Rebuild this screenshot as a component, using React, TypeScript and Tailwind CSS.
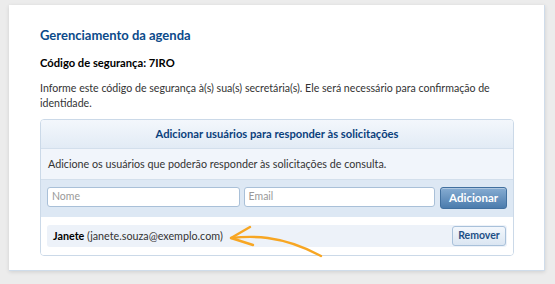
import React from "react";

const font = { fontFamily: 'Lato, "Open Sans", Arial, sans-serif' };

const Arrow = () => (
  <svg
    className="absolute left-[226px] top-[223px] pointer-events-none"
    width="100"
    height="38"
    viewBox="226 223 100 38"
    fill="none"
    stroke="#f7a623"
    strokeWidth="2.4"
    strokeLinecap="round"
    strokeLinejoin="round"
  >
    <path d="M231 238 C 250 236, 280 234, 321 256" />
    <path d="M250 227 L231 238 L253 245" />
  </svg>
);

const App = () => {
  return (
    <div className="relative w-[555px] h-[284px] bg-[#ececec] overflow-hidden" style={font}>
      <div className="absolute left-[9px] top-[5px] w-[536px] h-[266px] bg-white border-r border-b border-[#cfdcea] shadow-[0_1px_4px_rgba(0,0,0,0.12)] pl-[31px] pt-[21px]">
        <h1 className="text-[13px] leading-[18px] font-bold text-[#0b4a8a]">Gerenciamento da agenda</h1>
        <p className="mt-[11px] text-[11.2px] leading-[15px] font-bold text-black">Código de segurança: 7IRO</p>
        <p className="mt-[11px] w-[480px] text-[10.6px] leading-[15px] text-[#333]">
          Informe este código de segurança à(s) sua(s) secretária(s). Ele será necessário para confirmação de identidade.
        </p>
        <div className="mt-[8px] w-[474px] h-[137px] border border-[#cbd9e8] rounded-[4px] overflow-hidden flex flex-col">
          <div className="h-[29px] flex items-center justify-center bg-gradient-to-b from-[#f3f7fc] to-[#e2ebf5] border-b border-[#d3dfec] text-[11.2px] font-bold text-[#0a3f7c]">
            Adicionar usuários para responder às solicitações
          </div>
          <div className="h-[31px] flex items-center px-[7px] bg-[#f1f5fb] border-b border-[#d3dfec] text-[10.75px] text-[#333]">
            Adicione os usuários que poderão responder às solicitações de consulta.
          </div>
          <div className="h-[37px] flex items-start gap-[4px] px-[6px] pt-[7px] bg-[#dde8f4]">
            <div className="w-[193px] h-[20px] bg-white border border-[#a9c0d8] rounded-[3px] flex items-center px-[4px] text-[10.5px] text-[#999]">Nome</div>
            <div className="w-[192px] h-[20px] bg-white border border-[#a9c0d8] rounded-[3px] flex items-center px-[4px] text-[10.5px] text-[#999]">Email</div>
            <button className="ml-[1px] w-[67px] h-[22px] rounded-[3px] border border-[#41709f] bg-gradient-to-b from-[#86acd2] to-[#4b7cad] text-white text-[11.5px] font-bold flex items-center justify-center shadow-[inset_0_1px_0_rgba(255,255,255,0.35)]">
              Adicionar
            </button>
          </div>
          <div className="flex-1 bg-white px-[6px] pt-[8px]">
            <div className="h-[22px] bg-[#edf2f9] rounded-[3px] flex items-center justify-between pl-[6px] pr-[1px]">
              <span className="text-[10.75px] text-[#333]">
                <b className="text-black">Janete</b> (janete.souza@exemplo.com)
              </span>
              <button className="w-[54px] h-[20px] rounded-[3px] border border-[#a9c1da] bg-gradient-to-b from-[#f3f7fc] to-[#dbe6f2] text-[10.5px] font-bold text-[#1d4f86] flex items-center justify-center">
                Remover
              </button>
            </div>
          </div>
        </div>
      </div>
      <Arrow />
    </div>
  );
};

export default App;
